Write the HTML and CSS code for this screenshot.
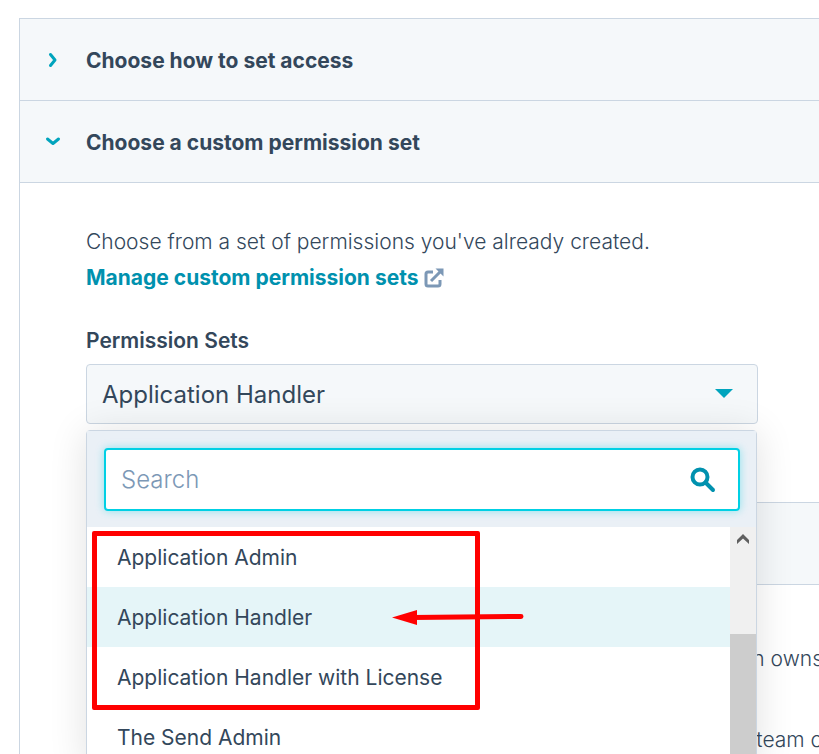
FILE: index.html
```html
<!DOCTYPE html>
<html lang="en">
<head>
    <meta charset="UTF-8">
    <meta name="viewport" content="width=device-width, initial-scale=1.0">
    <title>Permission Sets</title>
    <link rel="stylesheet" href="styles.css">
</head>
<body>
    <main class="accordion">
        <section class="panel">
            <h2 class="panel-title">
                <button class="panel-toggle" type="button" aria-expanded="false">
                    <svg class="chevron" viewBox="0 0 16 16"><path d="M5.500 2.500L10 8L5.500 13.500"/></svg>
                    Choose how to set access
                </button>
            </h2>
        </section>

        <section class="panel">
            <h2 class="panel-title">
                <button class="panel-toggle" type="button" aria-expanded="true">
                    <svg class="chevron" viewBox="0 0 16 16"><path d="M2.500 5L8 9.500L13.500 5"/></svg>
                    Choose a custom permission set
                </button>
            </h2>
            <div class="panel-body">
                <p class="intro">Choose from a set of permissions you've already created.</p>
                <a class="manage-link" href="#">Manage custom permission sets
                    <svg class="external" viewBox="0 0 20 20"><path d="M9 4H4Q2 4 2 6V16Q2 18 4 18H14Q16 18 16 16V12"/><path d="M7 13L16 4"/><path class="external-tip" d="M11.500 .5H19.500V8.500Z"/></svg>
                </a>

                <label class="field-label" for="permission-set">Permission Sets</label>
                <div class="dropdown">
                    <select class="dropdown-select" id="permission-set">
                        <option>Application Handler</option>
                    </select>
                    <svg class="caret" viewBox="0 0 18 9"><path d="M0 0H18L9 9Z"/></svg>

                    <div class="menu">
                        <div class="menu-search">
                            <div class="search-box">
                                <input class="search-input" type="text" placeholder="Search" aria-label="Search">
                                <svg class="search-icon" viewBox="0 0 26 26"><circle cx="10" cy="10" r="7.500"/><path d="M15.500 15.500L23 23"/></svg>
                            </div>
                        </div>
                        <div class="menu-list">
                            <ul class="options">
                                <li><button class="option" type="button">Application Admin</button></li>
                                <li><button class="option selected" type="button">Application Handler</button></li>
                                <li><button class="option" type="button">Application Handler with License</button></li>
                                <li><button class="option" type="button">The Send Admin</button></li>
                            </ul>
                            <div class="scrollbar">
                                <svg class="scroll-up" viewBox="0 0 12 10"><path d="M0 6L6 0L12 6V10L6 4.500L0 10Z"/></svg>
                                <div class="scroll-thumb"></div>
                            </div>
                            <div class="highlight"></div>
                            <svg class="arrow" viewBox="0 0 132 16"><path class="arrow-line" d="M20 8.500L129 7.500"/><path d="M0 8.500L25 1V16Z"/></svg>
                        </div>
                    </div>
                </div>
            </div>

            <div class="team-access">
                <div class="team-header"></div>
                <div class="team-text">
                    <p>n owns</p>
                    <p>team o</p>
                </div>
            </div>
        </section>
    </main>
</body>
</html>
```
FILE: styles.css
```css
* {
    box-sizing: border-box;
}
body {
    margin: 0;
    height: 100vh;
    overflow: hidden;
    padding: 18px 0 0 19px;
    background: #fff;
    color: #33475b;
    font-family: Inter, "Open Sans", sans-serif;
    font-size: 21px;
    font-weight: 300;
}
p, h2, ul {
    margin: 0;
    padding: 0;
}
button, input, select {
    font: inherit;
    color: inherit;
}
.accordion {
    border: 1px solid #cbd6e2;
    border-right: 0;
}
.panel-title {
    height: 82px;
    background: #f5f8fa;
    border-bottom: 1px solid #cbd6e2;
    font-size: 21px;
    font-weight: 700;
}
.panel-toggle {
    display: flex;
    align-items: center;
    gap: 25px;
    width: 100%;
    height: 100%;
    padding: 1px 0 0 25px;
    border: 0;
    background: none;
    text-align: left;
}
.chevron {
    width: 16px;
    height: 16px;
    fill: none;
    stroke: #00a4bd;
    stroke-width: 3;
    stroke-linecap: round;
    stroke-linejoin: round;
}
.panel-body {
    padding: 41px 61px 78px 66px;
}
.intro {
    line-height: 36px;
}
.manage-link {
    display: flex;
    align-items: center;
    gap: 6px;
    line-height: 36px;
    color: #0091ae;
    font-weight: 700;
    text-decoration: none;
}
.external {
    width: 20px;
    height: 20px;
    fill: none;
    stroke: #7c98b6;
    stroke-width: 3;
}
.external-tip {
    fill: #7c98b6;
    stroke: none;
}
.field-label {
    display: block;
    margin-top: 27px;
    margin-bottom: 5px;
    line-height: 36px;
    font-weight: 600;
}
.dropdown {
    position: relative;
}
.dropdown-select {
    display: block;
    width: 100%;
    height: 60px;
    padding: 0 15px;
    appearance: none;
    border: 1px solid #cbd6e2;
    border-radius: 4px;
    background: #f5f8fa;
    font-size: 24px;
    font-weight: 400;
}
.caret {
    position: absolute;
    top: 25px;
    right: 25px;
    width: 18px;
    height: 9px;
    fill: #00a4bd;
}
.menu {
    position: absolute;
    top: 66px;
    left: 0;
    right: 1px;
    z-index: 1;
    border: 1px solid #cbd6e2;
    border-radius: 4px;
    background: #fff;
    box-shadow: 0 2px 38px rgba(0, 0, 0, 0.12);
}
.menu-search {
    padding: 17px 16px 16px 17px;
    background: #eaf0f6;
}
.search-box {
    display: flex;
    align-items: center;
    height: 63px;
    padding: 0 22px 0 15px;
    border: 2px solid #00d0e4;
    border-radius: 4px;
    background: #fff;
    box-shadow: 0 0 8px rgba(0, 208, 228, 0.4);
}
.search-input {
    flex: 1;
    min-width: 0;
    padding: 0;
    border: 0;
    outline: 0;
    background: none;
    font-size: 24px;
}
.search-input::placeholder {
    color: #7c98b6;
}
.search-icon {
    width: 26px;
    height: 26px;
    fill: none;
    stroke: #0091ae;
    stroke-width: 4;
    stroke-linecap: round;
}
.menu-list {
    display: flex;
    position: relative;
}
.options {
    flex: 1;
    list-style: none;
}
.option {
    display: block;
    width: 100%;
    height: 60px;
    padding: 0 30px;
    border: 0;
    background: #fff;
    font-weight: 400;
    text-align: left;
}
.option.selected {
    background: #e5f5f8;
}
.scrollbar {
    display: flex;
    flex-direction: column;
    align-items: center;
    justify-content: space-between;
    width: 26px;
    padding-top: 7px;
    background: #f0f0f0;
}
.scroll-up {
    width: 12px;
    height: 10px;
    fill: #606060;
}
.scroll-thumb {
    width: 100%;
    height: 133px;
    background: #cdcdcd;
}
.highlight {
    position: absolute;
    top: 4px;
    left: 5px;
    width: 388px;
    height: 179px;
    border: 5px solid #f00;
    border-radius: 2px;
}
.arrow {
    position: absolute;
    top: 82px;
    left: 305px;
    width: 132px;
    height: 16px;
    fill: #f00;
}
.arrow-line {
    stroke: #f00;
    stroke-width: 5;
    stroke-linecap: round;
}
.team-access {
    margin-left: 66px;
    border: 1px solid #cbd6e2;
    border-right: 0;
}
.team-header {
    height: 82px;
    background: #f5f8fa;
    border-bottom: 1px solid #cbd6e2;
}
.team-text {
    display: flex;
    flex-direction: column;
    align-items: flex-end;
    gap: 45px;
    margin-right: -4px;
    padding: 56px 0;
    line-height: 36px;
}
```
